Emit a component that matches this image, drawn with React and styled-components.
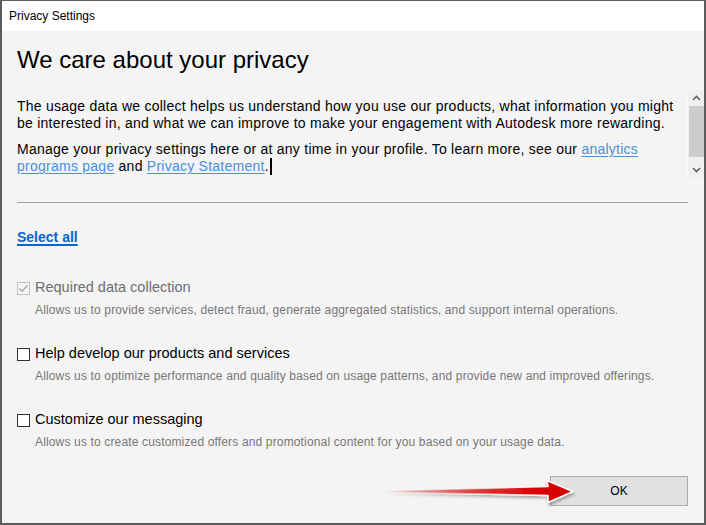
import React from "react";
import styled, { createGlobalStyle } from "styled-components";

const Global = createGlobalStyle`
  html, body { margin: 0; padding: 0; background: #ffffff; }
  * { box-sizing: border-box; }
`;

const Window = styled.div`
  position: relative;
  width: 706px;
  height: 525px;
  display: flex;
  flex-direction: column;
  border: 2px solid #5c5c5c;
  border-top-width: 1px;
  background: #f4f4f4;
  font-family: "Liberation Sans", Arial, sans-serif;
  color: #000;
`;

const TitleBar = styled.div`
  height: 30px;
  flex: none;
  display: flex;
  align-items: center;
  padding-left: 7px;
  background: #ffffff;
  font-size: 12px;
  color: #000;
`;

const Body = styled.div`
  flex: 1;
  display: flex;
  flex-direction: column;
  padding: 15px 0 17px 15px;
`;

const Heading = styled.h1`
  margin: 0;
  font-size: 24px;
  font-weight: normal;
  line-height: 27px;
`;

const ScrollRegion = styled.div`
  margin-top: 18px;
  height: 87px;
  display: flex;
`;

const ScrollText = styled.div`
  flex: 1;
  padding: 7px 4px 0 0;
  font-size: 14px;
  line-height: 17px;
  letter-spacing: 0.25px;
  overflow: hidden;
`;

const Para = styled.p`
  margin: 0 0 9px;
`;

const TextLink = styled.a`
  color: #4a8fd8;
  text-decoration: underline;
  text-underline-offset: 2px;
`;

const Caret = styled.span`
  display: inline-block;
  width: 2px;
  height: 17px;
  margin-left: 1px;
  vertical-align: -4px;
  background: #000;
`;

const Scrollbar = styled.div`
  width: 17px;
  flex: none;
  margin-top: -1px;
  display: flex;
  flex-direction: column;
  background: #f0f0f0;
  border-left: 1px solid #fafafa;
`;

const ScrollArrow = styled.div`
  height: 16px;
  flex: none;
  display: flex;
  align-items: center;
  justify-content: center;
`;

const ScrollTrack = styled.div`
  flex: 1;
  display: flex;
  flex-direction: column;
  padding: 0 0 4px 1px;
`;

const Thumb = styled.div`
  height: 51px;
  background: #cdcdcd;
`;

const Divider = styled.hr`
  margin: 24px 16px 0 0;
  border: none;
  border-top: 1px solid #a0a0a0;
  height: 0;
`;

const SelectAll = styled.a`
  margin-top: 26px;
  align-self: flex-start;
  font-size: 14px;
  line-height: 17px;
  font-weight: bold;
  color: #0a64cf;
  text-decoration: underline;
  text-decoration-thickness: 2px;
  text-underline-offset: 2px;
`;

const OptionList = styled.div`
  margin-top: 33px;
  display: flex;
  flex-direction: column;
  gap: 27px;
`;

const Option = styled.div`
  display: flex;
  flex-direction: column;
  gap: 7px;
`;

const OptionLabel = styled.label`
  display: flex;
  align-items: center;
  gap: 5px;
  font-size: 14.5px;
  line-height: 17px;
  color: ${(p) => (p.$disabled ? "#6e6e6e" : "#000")};
`;

const Box = styled.span`
  width: 13px;
  height: 13px;
  flex: none;
  display: flex;
  align-items: center;
  justify-content: center;
  margin-top: 1px;
  border: 1px solid ${(p) => (p.$disabled ? "#c2c2c2" : "#333333")};
  background: ${(p) => (p.$disabled ? "#f4f4f4" : "#ffffff")};
`;

const OptionDesc = styled.div`
  padding-left: 18px;
  font-size: 12px;
  line-height: 15px;
  letter-spacing: 0.15px;
  color: #777777;
`;

const Footer = styled.div`
  margin-top: auto;
  display: flex;
  justify-content: flex-end;
  padding-right: 16px;
`;

const OkButton = styled.button`
  width: 138px;
  height: 30px;
  background: #e1e1e1;
  border: 1px solid #adadad;
  font-family: "Liberation Sans", Arial, sans-serif;
  font-size: 12px;
  color: #000;
  padding: 0;
`;

const Pointer = styled.svg`
  position: absolute;
  left: 368px;
  top: 468px;
  overflow: visible;
`;

const Chevron = ({ up }) => (
  <svg width="9" height="6" viewBox="0 0 9 6">
    <path
      d={up ? "M1 5 L4.5 1.5 L8 5" : "M1 1 L4.5 4.5 L8 1"}
      fill="none"
      stroke="#606060"
      strokeWidth="1.6"
    />
  </svg>
);

const Check = () => (
  <svg width="11" height="11" viewBox="0 0 11 11">
    <path d="M1.5 5.5 L4.2 8.2 L9.5 2.2" fill="none" stroke="#a8a8a8" strokeWidth="1.3" />
  </svg>
);

const options = [
  {
    label: "Required data collection",
    desc: "Allows us to provide services, detect fraud, generate aggregated statistics, and support internal operations.",
    disabled: true,
  },
  {
    label: "Help develop our products and services",
    desc: "Allows us to optimize performance and quality based on usage patterns, and provide new and improved offerings.",
  },
  {
    label: "Customize our messaging",
    desc: "Allows us to create customized offers and promotional content for you based on your usage data.",
  },
];

export default function App() {
  return (
    <>
      <Global />
      <Window>
        <TitleBar>Privacy Settings</TitleBar>
        <Body>
          <Heading>We care about your privacy</Heading>
          <ScrollRegion>
            <ScrollText>
              <Para>
                The usage data we collect helps us understand how you use our products, what
                information you might be interested in, and what we can improve to make your
                engagement with Autodesk more rewarding.
              </Para>
              <Para>
                Manage your privacy settings here or at any time in your profile. To learn more,
                see our <TextLink>analytics programs page</TextLink> and{" "}
                <TextLink>Privacy Statement</TextLink>.<Caret />
              </Para>
            </ScrollText>
            <Scrollbar>
              <ScrollArrow>
                <Chevron up />
              </ScrollArrow>
              <ScrollTrack>
                <Thumb />
              </ScrollTrack>
              <ScrollArrow>
                <Chevron />
              </ScrollArrow>
            </Scrollbar>
          </ScrollRegion>
          <Divider />
          <SelectAll>Select all</SelectAll>
          <OptionList>
            {options.map((o) => (
              <Option key={o.label}>
                <OptionLabel $disabled={o.disabled}>
                  <Box $disabled={o.disabled}>{o.disabled && <Check />}</Box>
                  {o.label}
                </OptionLabel>
                <OptionDesc>{o.desc}</OptionDesc>
              </Option>
            ))}
          </OptionList>
          <Footer>
            <OkButton>OK</OkButton>
          </Footer>
        </Body>
        <Pointer width="215" height="45" viewBox="0 0 215 45">
          <defs>
            <linearGradient id="shaftFill" x1="10" y1="0" x2="170" y2="0" gradientUnits="userSpaceOnUse">
              <stop offset="0" stopColor="#e01010" stopOpacity="0" />
              <stop offset="0.55" stopColor="#dc1c1c" stopOpacity="0.75" />
              <stop offset="1" stopColor="#d80000" stopOpacity="1" />
            </linearGradient>
            <linearGradient id="edge" x1="10" y1="0" x2="170" y2="0" gradientUnits="userSpaceOnUse">
              <stop offset="0" stopColor="#ffffff" stopOpacity="0" />
              <stop offset="1" stopColor="#ffffff" stopOpacity="1" />
            </linearGradient>
            <filter id="drop" x="-10%" y="-50%" width="130%" height="200%">
              <feDropShadow dx="1" dy="2" stdDeviation="1.6" floodColor="#000" floodOpacity="0.35" />
            </filter>
          </defs>
          <path
            d="M12 22 L178 17.5 L177 11.5 L203 22.5 L178 33.5 L178 26.5 L12 23 Z"
            fill="url(#shaftFill)"
            stroke="url(#edge)"
            strokeWidth="1.6"
            strokeLinejoin="round"
            filter="url(#drop)"
          />
        </Pointer>
      </Window>
    </>
  );
}
